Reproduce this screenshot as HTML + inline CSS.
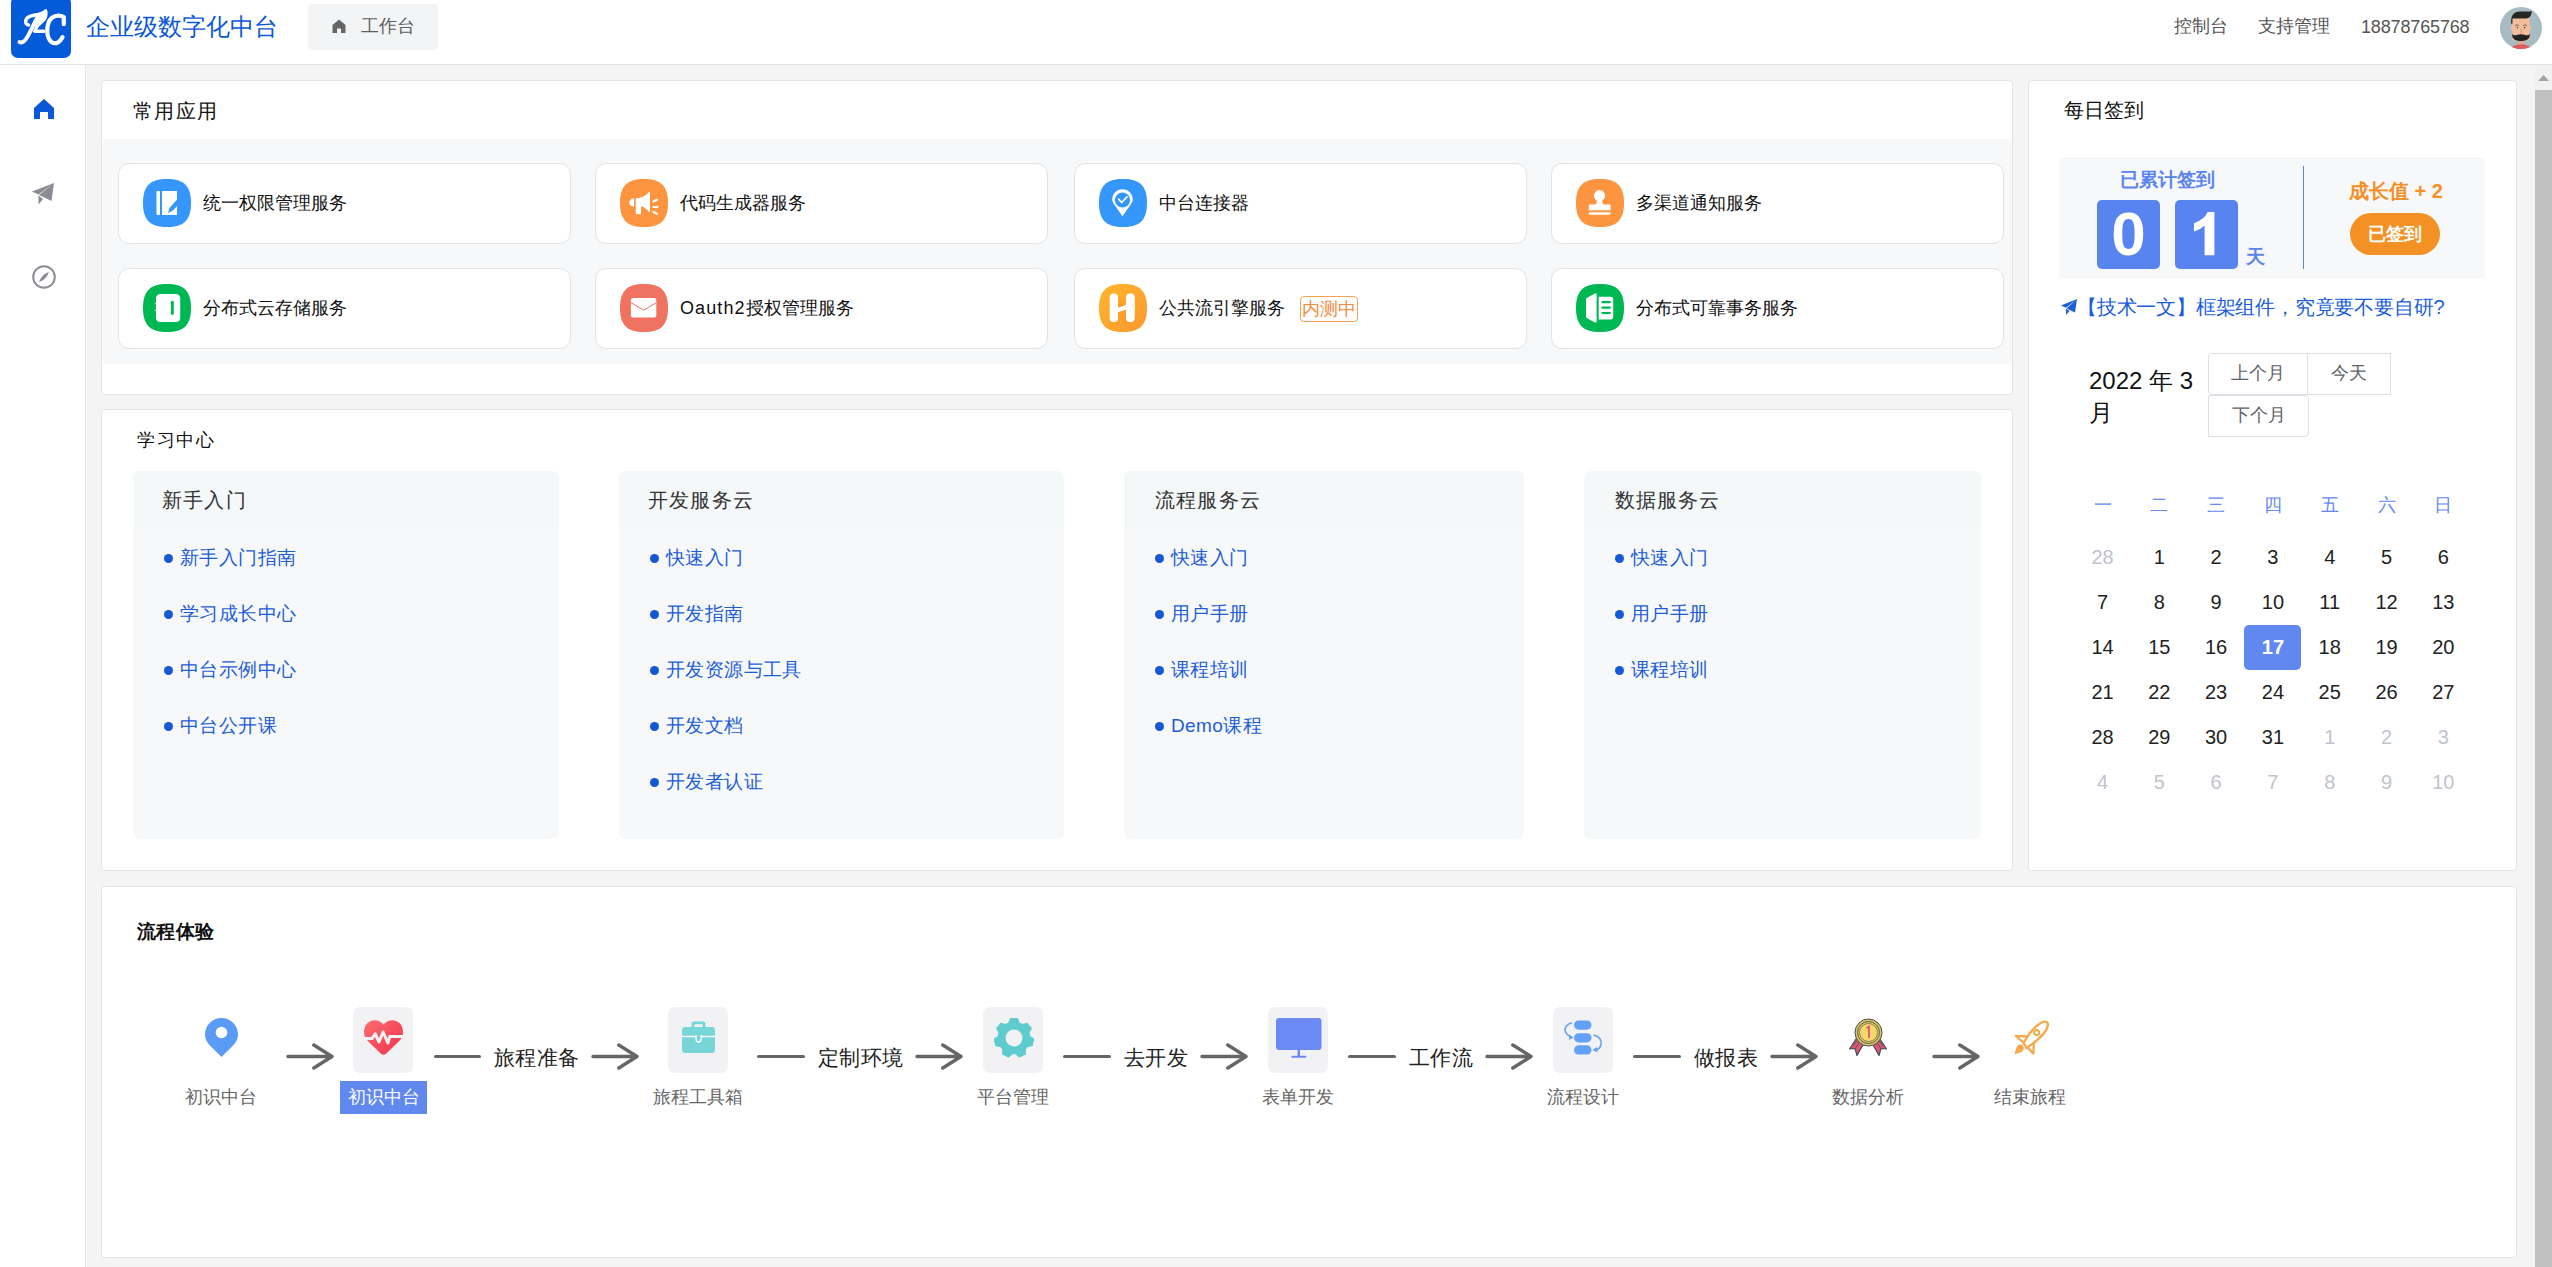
<!DOCTYPE html>
<html><head><meta charset="utf-8">
<style>
*{box-sizing:border-box;margin:0;padding:0}
html,body{width:2552px;height:1267px;overflow:hidden;background:#f4f4f4;font-family:"Liberation Sans",sans-serif;color:#000}
.a{position:absolute;white-space:nowrap}
#hdr{left:0;top:0;width:2552px;height:65px;background:#fff;border-bottom:1px solid #e2e2e2}
#side{left:0;top:65px;width:86px;height:1202px;background:#fff;border-right:1px solid #e6e6e6}
.card{position:absolute;background:#fff;border:1px solid #e4e4e4;border-radius:4px}
.app{position:absolute;background:#fff;border:1px solid #e3e3e3;border-radius:11px;width:453px;height:81px}
.app svg{position:absolute;left:24px;top:15px}
.app .t{position:absolute;left:84px;top:27px;font-size:18px;line-height:24px;color:#111}
.panel{position:absolute;top:471px;height:368px;background:linear-gradient(#f4f8f9 0,#f4f8f9 57px,#f7f8fa 57px);border-radius:6px}
.panel .h{position:absolute;left:29px;top:16px;font-size:20px;line-height:26px;color:#333;letter-spacing:1.2px}
.lk{position:absolute;left:30px;font-size:19px;line-height:24px;color:#1d5ed6;margin-top:1px;letter-spacing:0.4px}
.lk:before{content:"";display:inline-block;width:9px;height:9px;border-radius:50%;background:#1558d6;margin-left:1px;margin-right:7px;vertical-align:1px}
.cal{position:absolute;width:57px;text-align:center;font-size:20px;line-height:24px;color:#222}
.cal.g{color:#c0c4cc}
.wk{position:absolute;width:57px;text-align:center;font-size:18px;line-height:24px;color:#6689f2}
.btn{position:absolute;border:1px solid #dcdfe6;background:#fff;font-size:18px;color:#606266;text-align:center;line-height:39px}
.fl{position:absolute;font-size:18px;line-height:22px;color:#666;text-align:center}
.ft{position:absolute;font-size:21px;line-height:26px;color:#222;letter-spacing:0.4px;margin-top:1px}
.box{position:absolute;top:1007px;width:60px;height:66px;background:#f2f2f4;border-radius:7px}
</style></head><body>

<!-- HEADER -->
<div id="hdr" class="a"></div>
<div class="a" style="left:11px;top:-4px;width:60px;height:62px;background:#045bd9;border-radius:7px"></div>
<svg class="a" style="left:11px;top:0" width="60" height="58" viewBox="0 0 60 58">
  <g fill="none" stroke="#fff" stroke-linecap="round" stroke-linejoin="round">
    <path d="M17.5 25 C14 24.5 13.5 19.5 17.5 17 C21 15 26 15.2 30 13.6 C32 12.8 33.5 12 34.6 11" stroke-width="3.4"/>
    <path d="M34.6 11 C36 15.5 34 19.5 30 22.5 C27.5 24.5 25.5 26.5 24.5 29.5" stroke-width="3.2"/>
    <path d="M26.8 16.5 C23 23 20 31 16 37.5 C13.5 41.5 11 43.5 8.5 42" stroke-width="3.8"/>
    <path d="M23.8 31.3 L32.8 31.3" stroke-width="3.6"/>
    <path d="M52.8 24.2 L52.8 17 C48 14.5 41 15.2 37.8 22 C35.2 28 35.5 38 40.5 42 C45 45 49 42 51.5 37.2" stroke-width="4.2"/>
  </g>
  <path d="M24.5 15.3 C29 14.8 32 13.2 34.6 11 C35.8 15 34.5 19.5 30.5 22.5 L24.5 27 L21.8 27.5 L25.5 17.5 Z" fill="#fff"/>
</svg>
<div class="a" style="left:86px;top:11px;font-size:24px;line-height:32px;color:#0b57d7">企业级数字化中台</div>
<div class="a" style="left:308px;top:4px;width:130px;height:46px;background:#f3f4f6;border-radius:4px"></div>
<svg class="a" style="left:332px;top:19px" width="14" height="14" viewBox="0 0 14 14"><path d="M7 0.5 L13.5 6 L13.5 14 L9 14 L9 9.5 L5 9.5 L5 14 L0.5 14 L0.5 6 Z" fill="#666"/></svg>
<div class="a" style="left:361px;top:14px;font-size:18px;line-height:24px;color:#5e5e5e">工作台</div>
<div class="a" style="left:2174px;top:14px;font-size:18px;line-height:24px;color:#555">控制台</div>
<div class="a" style="left:2258px;top:14px;font-size:18px;line-height:24px;color:#555">支持管理</div>
<div class="a" style="left:2361px;top:15px;font-size:18px;line-height:24px;color:#555;letter-spacing:-0.15px">18878765768</div>
<svg class="a" style="left:2500px;top:7px" width="42" height="42" viewBox="0 0 42 42">
  <defs><clipPath id="avc"><circle cx="21" cy="21" r="21"/></clipPath></defs>
  <circle cx="21" cy="21" r="21" fill="#a6bbc2"/>
  <g clip-path="url(#avc)">
    <rect x="18.3" y="31" width="5.7" height="8" fill="#e9a68c"/>
    <path d="M12.5 39.5 Q21 35 29.7 39.5 L31 44 L11 44 Z" fill="#dd5b5f"/>
    <rect x="12.3" y="10.5" width="17.4" height="23" rx="1.5" fill="#f2bd99"/>
    <ellipse cx="12.2" cy="21" rx="1.5" ry="2" fill="#f2bd99"/>
    <ellipse cx="29.8" cy="21" rx="1.5" ry="2" fill="#f2bd99"/>
    <path d="M11.2 16.8 C10.8 8 13.5 4.8 20 4.6 C26 4.4 30 4.8 31.8 4 C31.5 9 29.5 11.5 25 11.5 L12.5 11.5 L12.3 17 Z" fill="#262626"/>
    <path d="M12.3 26.5 C13.5 29 15.5 28.5 17.5 27.8 C19.5 27 22.5 27 24.5 27.8 C26.5 28.5 28.5 29 29.7 26.5 L29.7 29.5 C28.5 33 25 34 21 34 C17 34 13.5 33 12.3 29.5 Z" fill="#222"/>
    <path d="M15 18.6 Q17 17.2 19.1 18.6 M23 18.6 Q25 17.2 27 18.6" stroke="#6b5a50" stroke-width="0.9" fill="none"/>
    <circle cx="17.4" cy="20.6" r="0.8" fill="#4a3f3a"/><circle cx="24.6" cy="20.6" r="0.8" fill="#4a3f3a"/>
    <rect x="20" y="21.5" width="2.4" height="5" rx="1.2" fill="#e8a590"/>
  </g>
</svg>

<!-- SIDEBAR -->
<div id="side" class="a"></div>
<svg class="a" style="left:34px;top:99px" width="20" height="20" viewBox="0 0 20 20"><path d="M10 0 L20 9 L20 20 L14 20 L14 13 L6 13 L6 20 L0 20 L0 9 Z" fill="#0b57d7"/></svg>
<svg class="a" style="left:32px;top:183px" width="22" height="22" viewBox="0 0 22 22"><path d="M22 0 L0 8.5 L6.5 11.5 Z M22 0 L7 12 L19.5 18 Z M6.5 12.5 L6.5 21.5 L11 16 Z" fill="#8a8c93"/></svg>
<svg class="a" style="left:32px;top:265px" width="24" height="24" viewBox="0 0 24 24"><circle cx="12" cy="12" r="10.8" fill="none" stroke="#8a8c93" stroke-width="2"/><path d="M17 7 C15 12 12 15.5 7 17 C9 12 12 8.5 17 7 Z" fill="#8a8c93"/></svg>

<!-- CARD 1 常用应用 -->
<div class="card" style="left:101px;top:80px;width:1912px;height:315px"></div>
<div class="a" style="left:103px;top:139px;width:1909px;height:225px;background:#f7f8fa"></div>
<div class="a" style="left:133px;top:97px;font-size:20px;line-height:28px;color:#111;letter-spacing:1.3px">常用应用</div>

<div class="app" style="left:118px;top:163px"><svg width="48" height="48" viewBox="0 0 48 48"><path d="M24 0 C41 0 48 7 48 24 C48 41 41 48 24 48 C7 48 0 41 0 24 C0 7 7 0 24 0 Z" fill="#3596fb"/><rect x="13.5" y="12" width="3.5" height="24" rx="1" fill="#fff"/><path d="M19 12 L34 12 L34 20.5 L26.5 29 L25 34 L30 31.5 L34 27 L34 36 L19 36 Z" fill="#fff"/><path d="M27.5 30 L33 24" stroke="#3596fb" stroke-width="1.2"/></svg><div class="t">统一权限管理服务</div></div>
<div class="app" style="left:595px;top:163px"><svg width="48" height="48" viewBox="0 0 48 48"><path d="M24 0 C41 0 48 7 48 24 C48 41 41 48 24 48 C7 48 0 41 0 24 C0 7 7 0 24 0 Z" fill="#fd943f"/><path d="M14 19.5 L14 27.5 C11 27.5 9.2 25.7 9.2 23.5 C9.2 21.3 11 19.5 14 19.5 Z" fill="#fff"/><path d="M15.6 19.3 C22 19 26 16.5 29 13 L30 13 L30 33 L29 33 C27 30.5 24.5 28 21 27.3 L21 35.3 L15.8 35.3 Z" fill="#fff"/><path d="M33.5 22.5 L37 20.8 M33.5 28 L37.5 28 M33.5 33 L37 34.8" stroke="#fff" stroke-width="2.2" stroke-linecap="round"/></svg><div class="t">代码生成器服务</div></div>
<div class="app" style="left:1074px;top:163px"><svg width="48" height="48" viewBox="0 0 48 48"><path d="M24 0 C41 0 48 7 48 24 C48 41 41 48 24 48 C7 48 0 41 0 24 C0 7 7 0 24 0 Z" fill="#3596fb"/><path d="M23.5 37.2 L16 26.5 C14 23.8 13.2 22.5 13.2 20.6 C13.2 14.8 17.8 10.3 23.5 10.3 C29.2 10.3 33.8 14.8 33.8 20.6 C33.8 22.5 33 23.8 31 26.5 Z" fill="#fff"/><circle cx="23.5" cy="21" r="7.6" fill="#3596fb"/><path d="M19.8 20.3 L22.6 23.5 L28 17.8" fill="none" stroke="#fff" stroke-width="1.8" stroke-linecap="round" stroke-linejoin="round"/></svg><div class="t">中台连接器</div></div>
<div class="app" style="left:1551px;top:163px"><svg width="48" height="48" viewBox="0 0 48 48"><path d="M24 0 C41 0 48 7 48 24 C48 41 41 48 24 48 C7 48 0 41 0 24 C0 7 7 0 24 0 Z" fill="#fd943f"/><circle cx="23.5" cy="16.6" r="5.6" fill="#fff"/><path d="M21 20 L26 20 L26.5 24 C27 25.3 28 25.6 30 25.6 L33.5 25.6 C34.2 25.6 34.6 26 34.6 26.7 L34.6 31.3 L12.8 31.3 L12.8 26.7 C12.8 26 13.2 25.6 14 25.6 L17 25.6 C19 25.6 20 25.3 20.5 24 Z" fill="#fff"/><rect x="12.8" y="33.2" width="21.8" height="2.6" rx="1.2" fill="#fff"/></svg><div class="t">多渠道通知服务</div></div>
<div class="app" style="left:118px;top:268px"><svg width="48" height="48" viewBox="0 0 48 48"><path d="M24 0 C41 0 48 7 48 24 C48 41 41 48 24 48 C7 48 0 41 0 24 C0 7 7 0 24 0 Z" fill="#00b853"/><path d="M13 10 L37.2 10 C37.2 10 37.2 10 37.2 10 L37.2 38 L13 38 Z" fill="none"/><path d="M17.5 9.9 L33 9.9 C35.5 9.9 37.2 11.6 37.2 14 L37.2 34 C37.2 36.4 35.5 38.1 33 38.1 L17.5 38.1 C15 38.1 13 36.4 13 34 L13 27 L11.5 26.3 L13 25.6 L13 20.4 L11.5 19.7 L13 19 L13 14 C13 11.6 15 9.9 17.5 9.9 Z" fill="#fff"/><rect x="27.9" y="16.8" width="2.9" height="14.2" rx="1.4" fill="#00b853"/></svg><div class="t">分布式云存储服务</div></div>
<div class="app" style="left:595px;top:268px"><svg width="48" height="48" viewBox="0 0 48 48"><path d="M24 0 C41 0 48 7 48 24 C48 41 41 48 24 48 C7 48 0 41 0 24 C0 7 7 0 24 0 Z" fill="#f07260"/><rect x="10.9" y="14" width="25.4" height="19.4" rx="2.2" fill="#fff"/><path d="M10.9 18.6 L23.6 26.2 L36.3 18.6" fill="none" stroke="#f07260" stroke-width="1"/></svg><div class="t"><span style="letter-spacing:1.1px">Oauth2</span>授权管理服务</div></div>
<div class="app" style="left:1074px;top:268px"><svg width="48" height="48" viewBox="0 0 48 48"><defs><linearGradient id="hg" x1="0" y1="0" x2="1" y2="1"><stop offset="0" stop-color="#feb62c"/><stop offset="1" stop-color="#fd9830"/></linearGradient></defs><path d="M24 0 C41 0 48 7 48 24 C48 41 41 48 24 48 C7 48 0 41 0 24 C0 7 7 0 24 0 Z" fill="url(#hg)"/><path d="M21 14 L38 30 L38 38 L26 38 L16 32 Z" fill="#fc9a2a" opacity="0.6"/><rect x="10.7" y="9.5" width="8.3" height="28.5" rx="4" fill="#fff"/><rect x="27" y="9.5" width="8.8" height="28.5" rx="4" fill="#fff"/><path d="M18.5 23.5 C21 23.2 24 22.5 27.2 20.5 L27.2 25.5 C24.5 26.5 21.5 27.5 18.5 28.3 Z" fill="#fff"/></svg><div class="t">公共流引擎服务<span style="display:inline-block;margin-left:15px;border:1px solid #f4a155;border-radius:4px;color:#f58a3a;font-size:18px;line-height:24px;padding:0 1px;vertical-align:top">内测中</span></div></div>
<div class="app" style="left:1551px;top:268px"><svg width="48" height="48" viewBox="0 0 48 48"><path d="M24 0 C41 0 48 7 48 24 C48 41 41 48 24 48 C7 48 0 41 0 24 C0 7 7 0 24 0 Z" fill="#00b853"/><path d="M11.5 13.5 L19 9.5 C20 9 20.6 9.6 20.6 10.5 L20.6 37.5 C20.6 38.4 20 38.9 19 38.5 L11.5 34.5 C10.6 34 10 33.3 10 32.3 L10 15.7 C10 14.7 10.6 14 11.5 13.5 Z" fill="#fff"/><path d="M22.7 12.8 L34.7 12.8 C36.1 12.8 37.2 13.9 37.2 15.3 L37.2 33 C37.2 34.4 36.1 35.5 34.7 35.5 L22.7 35.5 Z" fill="#fff"/><path d="M26.4 18.2 L33.8 18.2 M26.4 23.6 L33.8 23.6 M26.4 29 L33.8 29" stroke="#00b853" stroke-width="2.2" stroke-linecap="round"/></svg><div class="t">分布式可靠事务服务</div></div>
<!--APPS_END-->
<div class="card" style="left:101px;top:409px;width:1912px;height:462px"></div>
<div class="a" style="left:137px;top:427px;font-size:18px;line-height:26px;color:#111;letter-spacing:1.6px">学习中心</div>
<div class="panel" style="left:133px;width:426px"><div class="h">新手入门</div><div class="lk" style="top:74px">新手入门指南</div><div class="lk" style="top:130px">学习成长中心</div><div class="lk" style="top:186px">中台示例中心</div><div class="lk" style="top:242px">中台公开课</div></div>
<div class="panel" style="left:619px;width:445px"><div class="h">开发服务云</div><div class="lk" style="top:74px">快速入门</div><div class="lk" style="top:130px">开发指南</div><div class="lk" style="top:186px">开发资源与工具</div><div class="lk" style="top:242px">开发文档</div><div class="lk" style="top:298px">开发者认证</div></div>
<div class="panel" style="left:1124px;width:400px"><div class="h" style="left:31px">流程服务云</div><div class="lk" style="top:74px">快速入门</div><div class="lk" style="top:130px">用户手册</div><div class="lk" style="top:186px">课程培训</div><div class="lk" style="top:242px">Demo课程</div></div>
<div class="panel" style="left:1584px;width:397px"><div class="h" style="left:30.5px">数据服务云</div><div class="lk" style="top:74px">快速入门</div><div class="lk" style="top:130px">用户手册</div><div class="lk" style="top:186px">课程培训</div></div>
<div class="card" style="left:2028px;top:80px;width:489px;height:791px"></div>
<div class="a" style="left:2064px;top:96px;font-size:20px;line-height:28px;color:#111">每日签到</div>
<div class="a" style="left:2059px;top:157px;width:426px;height:121px;background:#f7f8fa;border-radius:5px 5px 0 0"></div>
<div class="a" style="left:2120px;top:167px;font-size:19px;line-height:26px;font-weight:bold;color:#5b84f0">已累计签到</div>
<div class="a" style="left:2097px;top:200px;width:63px;height:69px;background:#5884f0;border-radius:5px;color:#fff;font-weight:bold;font-size:62px;line-height:68px;text-align:center;letter-spacing:0">0</div>
<div class="a" style="left:2175px;top:200px;width:63px;height:69px;background:#5884f0;border-radius:5px"></div><svg class="a" style="left:2193.9px;top:211.6px" width="21" height="44" viewBox="0 0 21 44"><path d="M20.4 0 L13.6 0 C12.2 4 8 8 0 11.2 L0 19.4 C4.5 18 8 16 10.6 13.4 L10.6 43.2 L20.4 43.2 Z" fill="#fff"/></svg>
<div class="a" style="left:2246px;top:244px;font-size:19px;line-height:26px;font-weight:bold;color:#5b84f0">天</div>
<div class="a" style="left:2303px;top:166px;width:1px;height:103px;background:#5884f0"></div>
<div class="a" style="left:2349px;top:177px;font-size:20px;line-height:28px;font-weight:bold;color:#f39027">成长值 + 2</div>
<div class="a" style="left:2350px;top:213px;width:90px;height:42px;background:#f39125;border-radius:21px;color:#fff;font-weight:bold;font-size:18px;line-height:42px;text-align:center">已签到</div>
<svg class="a" style="left:2061px;top:299px" width="16" height="16" viewBox="0 0 16 16"><path d="M16 0 L0 6.5 L5 8.8 Z M16 0 L5.5 9.5 L14 13.5 Z M5 9.8 L5 16 L8.5 12 Z" fill="#1a5ed8"/></svg>
<div class="a" style="left:2077px;top:294px;font-size:20px;line-height:26px;color:#1a5ed8;letter-spacing:-0.2px">【技术一文】框架组件，究竟要不要自研?</div>
<div class="a" style="left:2089px;top:365px;font-size:24px;line-height:32px;color:#111;white-space:normal;width:112px">2022 年 3 月</div>
<div class="btn" style="left:2208px;top:353px;width:100px;height:42px;border-radius:4px 0 0 4px">上个月</div>
<div class="btn" style="left:2307px;top:353px;width:84px;height:42px;border-radius:0">今天</div>
<div class="btn" style="left:2208px;top:395px;width:101px;height:42px;border-radius:0 4px 4px 0">下个月</div>
<div class="wk" style="left:2074.0px;top:493px">一</div>
<div class="wk" style="left:2130.8px;top:493px">二</div>
<div class="wk" style="left:2187.6px;top:493px">三</div>
<div class="wk" style="left:2244.4px;top:493px">四</div>
<div class="wk" style="left:2301.2px;top:493px">五</div>
<div class="wk" style="left:2358.0px;top:493px">六</div>
<div class="wk" style="left:2414.8px;top:493px">日</div>
<div class="a" style="left:2244px;top:625px;width:57px;height:45px;background:#6088ef;border-radius:5px"></div>
<div class="cal g" style="left:2074.0px;top:545px">28</div>
<div class="cal" style="left:2130.8px;top:545px">1</div>
<div class="cal" style="left:2187.6px;top:545px">2</div>
<div class="cal" style="left:2244.4px;top:545px">3</div>
<div class="cal" style="left:2301.2px;top:545px">4</div>
<div class="cal" style="left:2358.0px;top:545px">5</div>
<div class="cal" style="left:2414.8px;top:545px">6</div>
<div class="cal" style="left:2074.0px;top:590px">7</div>
<div class="cal" style="left:2130.8px;top:590px">8</div>
<div class="cal" style="left:2187.6px;top:590px">9</div>
<div class="cal" style="left:2244.4px;top:590px">10</div>
<div class="cal" style="left:2301.2px;top:590px">11</div>
<div class="cal" style="left:2358.0px;top:590px">12</div>
<div class="cal" style="left:2414.8px;top:590px">13</div>
<div class="cal" style="left:2074.0px;top:635px">14</div>
<div class="cal" style="left:2130.8px;top:635px">15</div>
<div class="cal" style="left:2187.6px;top:635px">16</div>
<div class="cal" style="left:2244.4px;top:635px;color:#fff;font-weight:bold">17</div>
<div class="cal" style="left:2301.2px;top:635px">18</div>
<div class="cal" style="left:2358.0px;top:635px">19</div>
<div class="cal" style="left:2414.8px;top:635px">20</div>
<div class="cal" style="left:2074.0px;top:680px">21</div>
<div class="cal" style="left:2130.8px;top:680px">22</div>
<div class="cal" style="left:2187.6px;top:680px">23</div>
<div class="cal" style="left:2244.4px;top:680px">24</div>
<div class="cal" style="left:2301.2px;top:680px">25</div>
<div class="cal" style="left:2358.0px;top:680px">26</div>
<div class="cal" style="left:2414.8px;top:680px">27</div>
<div class="cal" style="left:2074.0px;top:725px">28</div>
<div class="cal" style="left:2130.8px;top:725px">29</div>
<div class="cal" style="left:2187.6px;top:725px">30</div>
<div class="cal" style="left:2244.4px;top:725px">31</div>
<div class="cal g" style="left:2301.2px;top:725px">1</div>
<div class="cal g" style="left:2358.0px;top:725px">2</div>
<div class="cal g" style="left:2414.8px;top:725px">3</div>
<div class="cal g" style="left:2074.0px;top:770px">4</div>
<div class="cal g" style="left:2130.8px;top:770px">5</div>
<div class="cal g" style="left:2187.6px;top:770px">6</div>
<div class="cal g" style="left:2244.4px;top:770px">7</div>
<div class="cal g" style="left:2301.2px;top:770px">8</div>
<div class="cal g" style="left:2358.0px;top:770px">9</div>
<div class="cal g" style="left:2414.8px;top:770px">10</div>
<div class="card" style="left:101px;top:886px;width:2416px;height:372px"></div>
<div class="a" style="left:137px;top:918px;font-size:19px;line-height:28px;font-weight:bold;color:#111;letter-spacing:0.3px">流程体验</div>
<svg class="a" style="left:205px;top:1017.5px" width="33" height="40" viewBox="0 0 33 40"><path d="M16.5 39 L5 27.5 C1.8 24.5 0 20.8 0 16.5 C0 7.4 7.4 0 16.5 0 C25.6 0 33 7.4 33 16.5 C33 20.8 31.2 24.5 28 27.5 Z" fill="#5a9bf6"/><circle cx="16.5" cy="14.5" r="5.8" fill="#fff"/></svg>
<div class="fl" style="left:151px;top:1086px;width:140px">初识中台</div>
<svg class="a" style="left:286px;top:1043px" width="49" height="28" viewBox="0 0 49 28"><path d="M2 13.5 L46 13.5 M27.8 2 L46 13.5 L27.8 25" fill="none" stroke="#666" stroke-width="3.4" stroke-linecap="round" stroke-linejoin="round"/></svg>
<div class="box" style="left:353px"></div>
<svg class="a" style="left:364px;top:1020px" width="39" height="35" viewBox="0 0 39 35"><defs><linearGradient id="hrt" x1="0" y1="0" x2="1" y2="1"><stop offset="0" stop-color="#fd6e72"/><stop offset="0.55" stop-color="#f64c5c"/><stop offset="1" stop-color="#e8384e"/></linearGradient></defs><path d="M19.5 34.8 C18.5 34.8 17.5 34.3 16.5 33.3 L4 21.3 C1 18.3 0 15.3 0 11.8 C0 5.3 4.5 0.2 10.5 0.2 C14 0.2 17 1.7 19.5 4.5 C22 1.7 25 0.2 28.5 0.2 C34.5 0.2 39 5.3 39 11.8 C39 15.3 38 18.3 35 21.3 L22.5 33.3 C21.5 34.3 20.5 34.8 19.5 34.8 Z" fill="url(#hrt)"/><path d="M-1 18.6 L8 18.6 L11.2 13.8 L15 22 L19.1 12 L23.9 23 L25.7 16.6 L40 16.6" fill="none" stroke="#f2f2f4" stroke-width="3" stroke-linejoin="round" stroke-linecap="round"/></svg>
<div class="a" style="left:340px;top:1081px;width:87px;height:33px;background:#6088ef;color:#fff;font-size:18px;line-height:33px;text-align:center">初识中台</div>
<div class="a" style="left:434px;top:1054.5px;width:47px;height:3.4px;background:#666;border-radius:2px"></div>
<div class="ft" style="left:494px;top:1044px">旅程准备</div>
<svg class="a" style="left:591px;top:1043px" width="49" height="28" viewBox="0 0 49 28"><path d="M2 13.5 L46 13.5 M27.8 2 L46 13.5 L27.8 25" fill="none" stroke="#666" stroke-width="3.4" stroke-linecap="round" stroke-linejoin="round"/></svg>
<div class="box" style="left:668px"></div>
<svg class="a" style="left:682px;top:1020.5px" width="33" height="32" viewBox="0 0 33 32"><path d="M9.5 6 L9.5 3 C9.5 1.3 10.5 0.5 12 0.5 L21 0.5 C22.5 0.5 23.5 1.3 23.5 3 L23.5 6 L20.5 6 L20.5 3.3 L12.5 3.3 L12.5 6 Z" fill="#76d5d6"/><rect x="0" y="6" width="33" height="26" rx="3" fill="#76d5d6"/><path d="M0 15.5 L33 15.5" stroke="#fff" stroke-width="1.3"/><path d="M14 14 L14 18 C14 20 15 21 16.5 21 C18 21 19 20 19 18 L19 14" fill="#76d5d6" stroke="#fff" stroke-width="1.3"/></svg>
<div class="fl" style="left:627.5px;top:1086px;width:140px">旅程工具箱</div>
<div class="a" style="left:757px;top:1054.5px;width:48px;height:3.4px;background:#666;border-radius:2px"></div>
<div class="ft" style="left:818px;top:1044px">定制环境</div>
<svg class="a" style="left:915px;top:1043px" width="49" height="28" viewBox="0 0 49 28"><path d="M2 13.5 L46 13.5 M27.8 2 L46 13.5 L27.8 25" fill="none" stroke="#666" stroke-width="3.4" stroke-linecap="round" stroke-linejoin="round"/></svg>
<div class="box" style="left:983px"></div>
<svg class="a" style="left:993.5px;top:1017.7px" width="40" height="40" viewBox="0 0 39.2 39.2"><path d="M14.54 4.84 L16.22 0.50 L22.98 0.50 L24.66 4.84 L27.99 6.45 L32.43 5.05 L36.64 10.33 L34.29 14.35 L35.11 17.96 L38.98 20.56 L37.47 27.14 L32.86 27.81 L30.56 30.70 L30.93 35.35 L24.85 38.28 L21.45 35.09 L17.75 35.09 L14.35 38.28 L8.27 35.35 L8.64 30.70 L6.34 27.81 L1.73 27.14 L0.22 20.56 L4.09 17.96 L4.91 14.35 L2.56 10.33 L6.77 5.05 L11.21 6.45 Z" fill="#5ecbcf" stroke="#5ecbcf" stroke-width="1" stroke-linejoin="round"/><circle cx="19.6" cy="19.6" r="15.2" fill="#5ecbcf"/><circle cx="19.6" cy="19.6" r="8.3" fill="#f2f2f4"/></svg>
<div class="fl" style="left:943px;top:1086px;width:140px">平台管理</div>
<div class="a" style="left:1063px;top:1054.5px;width:48px;height:3.4px;background:#666;border-radius:2px"></div>
<div class="ft" style="left:1124px;top:1044px">去开发</div>
<svg class="a" style="left:1200px;top:1043px" width="49" height="28" viewBox="0 0 49 28"><path d="M2 13.5 L46 13.5 M27.8 2 L46 13.5 L27.8 25" fill="none" stroke="#666" stroke-width="3.4" stroke-linecap="round" stroke-linejoin="round"/></svg>
<div class="box" style="left:1268px"></div>
<svg class="a" style="left:1275.5px;top:1017.5px" width="46" height="40" viewBox="0 0 46 40"><rect x="0" y="0" width="45.5" height="32" rx="3" fill="#6b8af5"/><rect x="21.6" y="31" width="2.4" height="7" fill="#6b8af5"/><rect x="15.3" y="37.8" width="15" height="2" rx="1" fill="#6b8af5"/></svg>
<div class="fl" style="left:1228px;top:1086px;width:140px">表单开发</div>
<div class="a" style="left:1348px;top:1054.5px;width:48px;height:3.4px;background:#666;border-radius:2px"></div>
<div class="ft" style="left:1409px;top:1044px">工作流</div>
<svg class="a" style="left:1485px;top:1043px" width="49" height="28" viewBox="0 0 49 28"><path d="M2 13.5 L46 13.5 M27.8 2 L46 13.5 L27.8 25" fill="none" stroke="#666" stroke-width="3.4" stroke-linecap="round" stroke-linejoin="round"/></svg>
<div class="box" style="left:1553px"></div>
<svg class="a" style="left:1564px;top:1019px" width="39" height="37" viewBox="0 0 39 37"><rect x="10" y="1.5" width="17.5" height="9.2" rx="4.6" fill="#64a0f5"/><rect x="10" y="14.2" width="17.5" height="9.2" rx="4.6" fill="#64a0f5"/><rect x="10" y="26.3" width="17.5" height="9.2" rx="4.6" fill="#64a0f5"/><path d="M8 3.8 C2.5 5 0 9 1.5 13 C2.5 15.5 4.5 17 6.5 17.8" fill="none" stroke="#64a0f5" stroke-width="1.6"/><path d="M9.5 18.8 L5 21 L5.5 15.5 Z" fill="#64a0f5"/><path d="M29.5 16 C35 17 38 21 37 25.5 C36.5 28.5 34 30.5 31.5 31" fill="none" stroke="#64a0f5" stroke-width="1.6"/><path d="M28.5 31 L33 28 L33.5 33.5 Z" fill="#64a0f5"/></svg>
<div class="fl" style="left:1513px;top:1086px;width:140px">流程设计</div>
<div class="a" style="left:1633px;top:1054.5px;width:48px;height:3.4px;background:#666;border-radius:2px"></div>
<div class="ft" style="left:1694px;top:1044px">做报表</div>
<svg class="a" style="left:1770px;top:1043px" width="49" height="28" viewBox="0 0 49 28"><path d="M2 13.5 L46 13.5 M27.8 2 L46 13.5 L27.8 25" fill="none" stroke="#666" stroke-width="3.4" stroke-linecap="round" stroke-linejoin="round"/></svg>
<svg class="a" style="left:1849px;top:1018px" width="38" height="39" viewBox="0 0 38 39"><path d="M9 18 L0.5 31 L6 30.5 L8 37.5 L15 25 Z" fill="#e0566f" stroke="#3d4f5c" stroke-width="1.2" stroke-linejoin="round"/><path d="M29 18 L37.5 31 L32 30.5 L30 37.5 L23 25 Z" fill="#e0566f" stroke="#3d4f5c" stroke-width="1.2" stroke-linejoin="round"/><path d="M4 28 L10 20 M6.5 30 L12 22 M34 28 L28 20 M31.5 30 L26 22" stroke="#3d4f5c" stroke-width="0.8"/><circle cx="19.5" cy="14.5" r="13.5" fill="#e6c85a" stroke="#3d4f5c" stroke-width="1"/><circle cx="19.5" cy="14.5" r="11" fill="none" stroke="#3d4f5c" stroke-width="0.9"/><circle cx="19.5" cy="14.5" r="9" fill="#f6d86a" stroke="#3d4f5c" stroke-width="0.6"/><path d="M17.5 10 L20 8.5 L20 20" fill="none" stroke="#e0566f" stroke-width="1.8"/></svg>
<div class="fl" style="left:1798px;top:1086px;width:140px">数据分析</div>
<svg class="a" style="left:1932px;top:1043px" width="49" height="28" viewBox="0 0 49 28"><path d="M2 13.5 L46 13.5 M27.8 2 L46 13.5 L27.8 25" fill="none" stroke="#666" stroke-width="3.4" stroke-linecap="round" stroke-linejoin="round"/></svg>
<svg class="a" style="left:2013.5px;top:1020px" width="35" height="35" viewBox="0 0 35 35"><path d="M9.5 23 C14 15 21 6 27.5 2.5 C31.5 0.5 34.5 2 33.8 5.5 C32.8 12 23 21 12.5 28 Z" fill="none" stroke="#f4a94a" stroke-width="2.3" stroke-linejoin="round"/><path d="M13.5 16.5 L1.8 15.8 L10 23" fill="none" stroke="#f4a94a" stroke-width="2.3" stroke-linejoin="round"/><path d="M20 21.5 L19.3 33.5 L12.5 26.5" fill="none" stroke="#f4a94a" stroke-width="2.3" stroke-linejoin="round"/><circle cx="22.7" cy="12.5" r="2.5" fill="none" stroke="#f4a94a" stroke-width="2"/><path d="M8 24.5 C5 24 3 25.5 2.5 27.5 L0.3 34.3 L6.5 32.5 C8.5 32 10 30 9.8 27.5 Z" fill="#f4a94a"/></svg>
<div class="fl" style="left:1960px;top:1086px;width:140px">结束旅程</div>
<div class="a" style="left:2535px;top:65px;width:17px;height:1202px;background:#f1f1f1"></div>
<svg class="a" style="left:2535px;top:65px" width="17" height="20" viewBox="0 0 17 20"><path d="M3 16 L8.5 10 L14 16 Z" fill="#a3a3a3"/></svg>
<div class="a" style="left:2535px;top:90px;width:17px;height:1177px;background:#c1c1c1"></div>
</body></html>
